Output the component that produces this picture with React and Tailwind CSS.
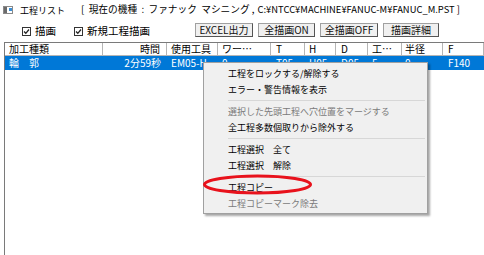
import React from 'react';

const cols = [
  { label: '加工種類', w: 'w-[98px]', align: 'text-left pl-[4px]' },
  { label: '時間', w: 'w-[64px]', align: 'text-right pr-[6px] justify-end' },
  { label: '使用工具', w: 'w-[51px]', align: 'text-left pl-[4px]' },
  { label: 'ワー…', w: 'w-[53px]', align: 'text-left pl-[4px]' },
  { label: 'T', w: 'w-[34px]', align: 'text-left pl-[5px]' },
  { label: 'H', w: 'w-[31px]', align: 'text-left pl-[4px]' },
  { label: 'D', w: 'w-[32px]', align: 'text-left pl-[5px]' },
  { label: '工…', w: 'w-[34px]', align: 'text-left pl-[4px]' },
  { label: '半径', w: 'w-[41px]', align: 'text-left pl-[3px]' },
  { label: 'F', w: 'flex-1', align: 'text-left pl-[5px]' },
];

const row = ['輪　郭', '2分59秒', 'EM05-H', '0', 'T05', 'H05', 'D05', '5', '0', 'F140'];

const menu = [
  { text: '工程をロックする/解除する' },
  { text: 'エラー・警告情報を表示' },
  { sep: true },
  { text: '選択した先頭工程へ穴位置をマージする', disabled: true },
  { text: '全工程多数個取りから除外する' },
  { sep: true },
  { text: '工程選択　全て' },
  { text: '工程選択　解除' },
  { sep: true },
  { text: '工程コピー' },
  { text: '工程コピーマーク除去', disabled: true },
];

const Check = ({ label }) => (
  <label className="flex items-center gap-[4px]">
    <span className="w-[9px] h-[9px] border border-[#333] bg-white flex items-center justify-center">
      <svg width="7" height="7" viewBox="0 0 7 7">
        <path d="M1 3.5 L2.8 5.3 L6 1.5" fill="none" stroke="#222" strokeWidth="1.3" />
      </svg>
    </span>
    <span>{label}</span>
  </label>
);

const Btn = ({ children, w }) => (
  <button className={`${w} h-[14px] bg-[#f0f0f0] border border-[#a0a0a0] border-r-[#555] border-b-[#555] text-[10px] leading-none text-[#111] flex items-center justify-center`}>
    {children}
  </button>
);

export default function App() {
  return (
    <div
      className="relative w-[484px] h-[255px] bg-white overflow-hidden flex flex-col text-black"
      style={{ fontFamily: '"Noto Sans CJK JP", "Noto Sans", sans-serif' }}
    >
      {/* Title */}
      <div className="h-[20px] flex items-center pl-[3px] text-[9px] leading-none whitespace-nowrap">
        <svg width="10" height="8" viewBox="0 0 10 8" className="mr-[7px]">
          <rect x="0.5" y="0.5" width="9" height="7" fill="#fff" stroke="#8a8a8a" />
          <rect x="1" y="1" width="3" height="6" fill="#6b6b6b" />
          <rect x="6" y="2" width="3" height="3" fill="#3b8fd6" />
        </svg>
        <span>工程リスト</span>
        <span className="ml-[16px] text-[9.7px]">[&nbsp;&nbsp;現在の機種&nbsp;&nbsp;:&nbsp;&nbsp;ファナック&nbsp;&nbsp;マシニング ,</span>
        <span className="ml-[3px] text-[9.4px]">C:¥NTCC¥MACHINE¥FANUC-M¥FANUC_M.PST ]</span>
      </div>

      {/* Toolbar */}
      <div className="h-[22px] flex items-center text-[10.5px] leading-none">
        <div className="ml-[22px]">
          <Check label="描画" />
        </div>
        <div className="ml-[18px]">
          <Check label="新規工程描画" />
        </div>
        <div className="ml-[45px] flex gap-[5px] -mt-[2px]">
          <Btn w="w-[58px]">EXCEL出力</Btn>
          <Btn w="w-[57px]">全描画ON</Btn>
          <Btn w="w-[58px]">全描画OFF</Btn>
          <Btn w="w-[56px]">描画詳細</Btn>
        </div>
      </div>

      {/* List */}
      <div className="flex-1 ml-[4px] border-l border-t border-[#7a7a7a] flex flex-col text-[10px] leading-[12px]">
        <div className="h-[13px] flex border-b border-[#b5b5b5]">
          {cols.map((c, i) => (
            <div key={i} className={`${c.w} shrink-0 ${c.align} border-r border-[#b5b5b5] flex items-center whitespace-nowrap`}>
              {c.label}
            </div>
          ))}
        </div>
        <div className="h-[14px] flex bg-[#0078d7] text-white">
          {cols.map((c, i) => (
            <div key={i} className={`${c.w} shrink-0 ${c.align} flex items-center whitespace-nowrap`}>
              {row[i]}
            </div>
          ))}
        </div>
      </div>

      {/* Context menu */}
      <div className="absolute left-[203px] top-[62px] w-[225px] bg-[#f0f0f0] border border-[#a0a0a0] shadow-[2px_2px_2px_rgba(0,0,0,0.35)] py-[2px] text-[9px] leading-none">
        {menu.map((m, i) =>
          m.sep ? (
            <div key={i} className="h-[6px] flex items-center pl-[24px] pr-[2px]">
              <div className="h-px w-full bg-[#d7d7d7]" />
            </div>
          ) : (
            <div key={i} className={`h-[16px] flex items-center pl-[24px] ${m.disabled ? 'text-[#7a7a7a]' : 'text-black'}`}>
              {m.text}
            </div>
          )
        )}
      </div>

      {/* Red highlight */}
      <svg className="absolute left-[202px] top-[174px]" width="111" height="21" viewBox="0 0 111 21">
        <ellipse cx="55.5" cy="10.5" rx="53" ry="8.5" fill="none" stroke="#e8121c" strokeWidth="3" />
      </svg>
    </div>
  );
}
